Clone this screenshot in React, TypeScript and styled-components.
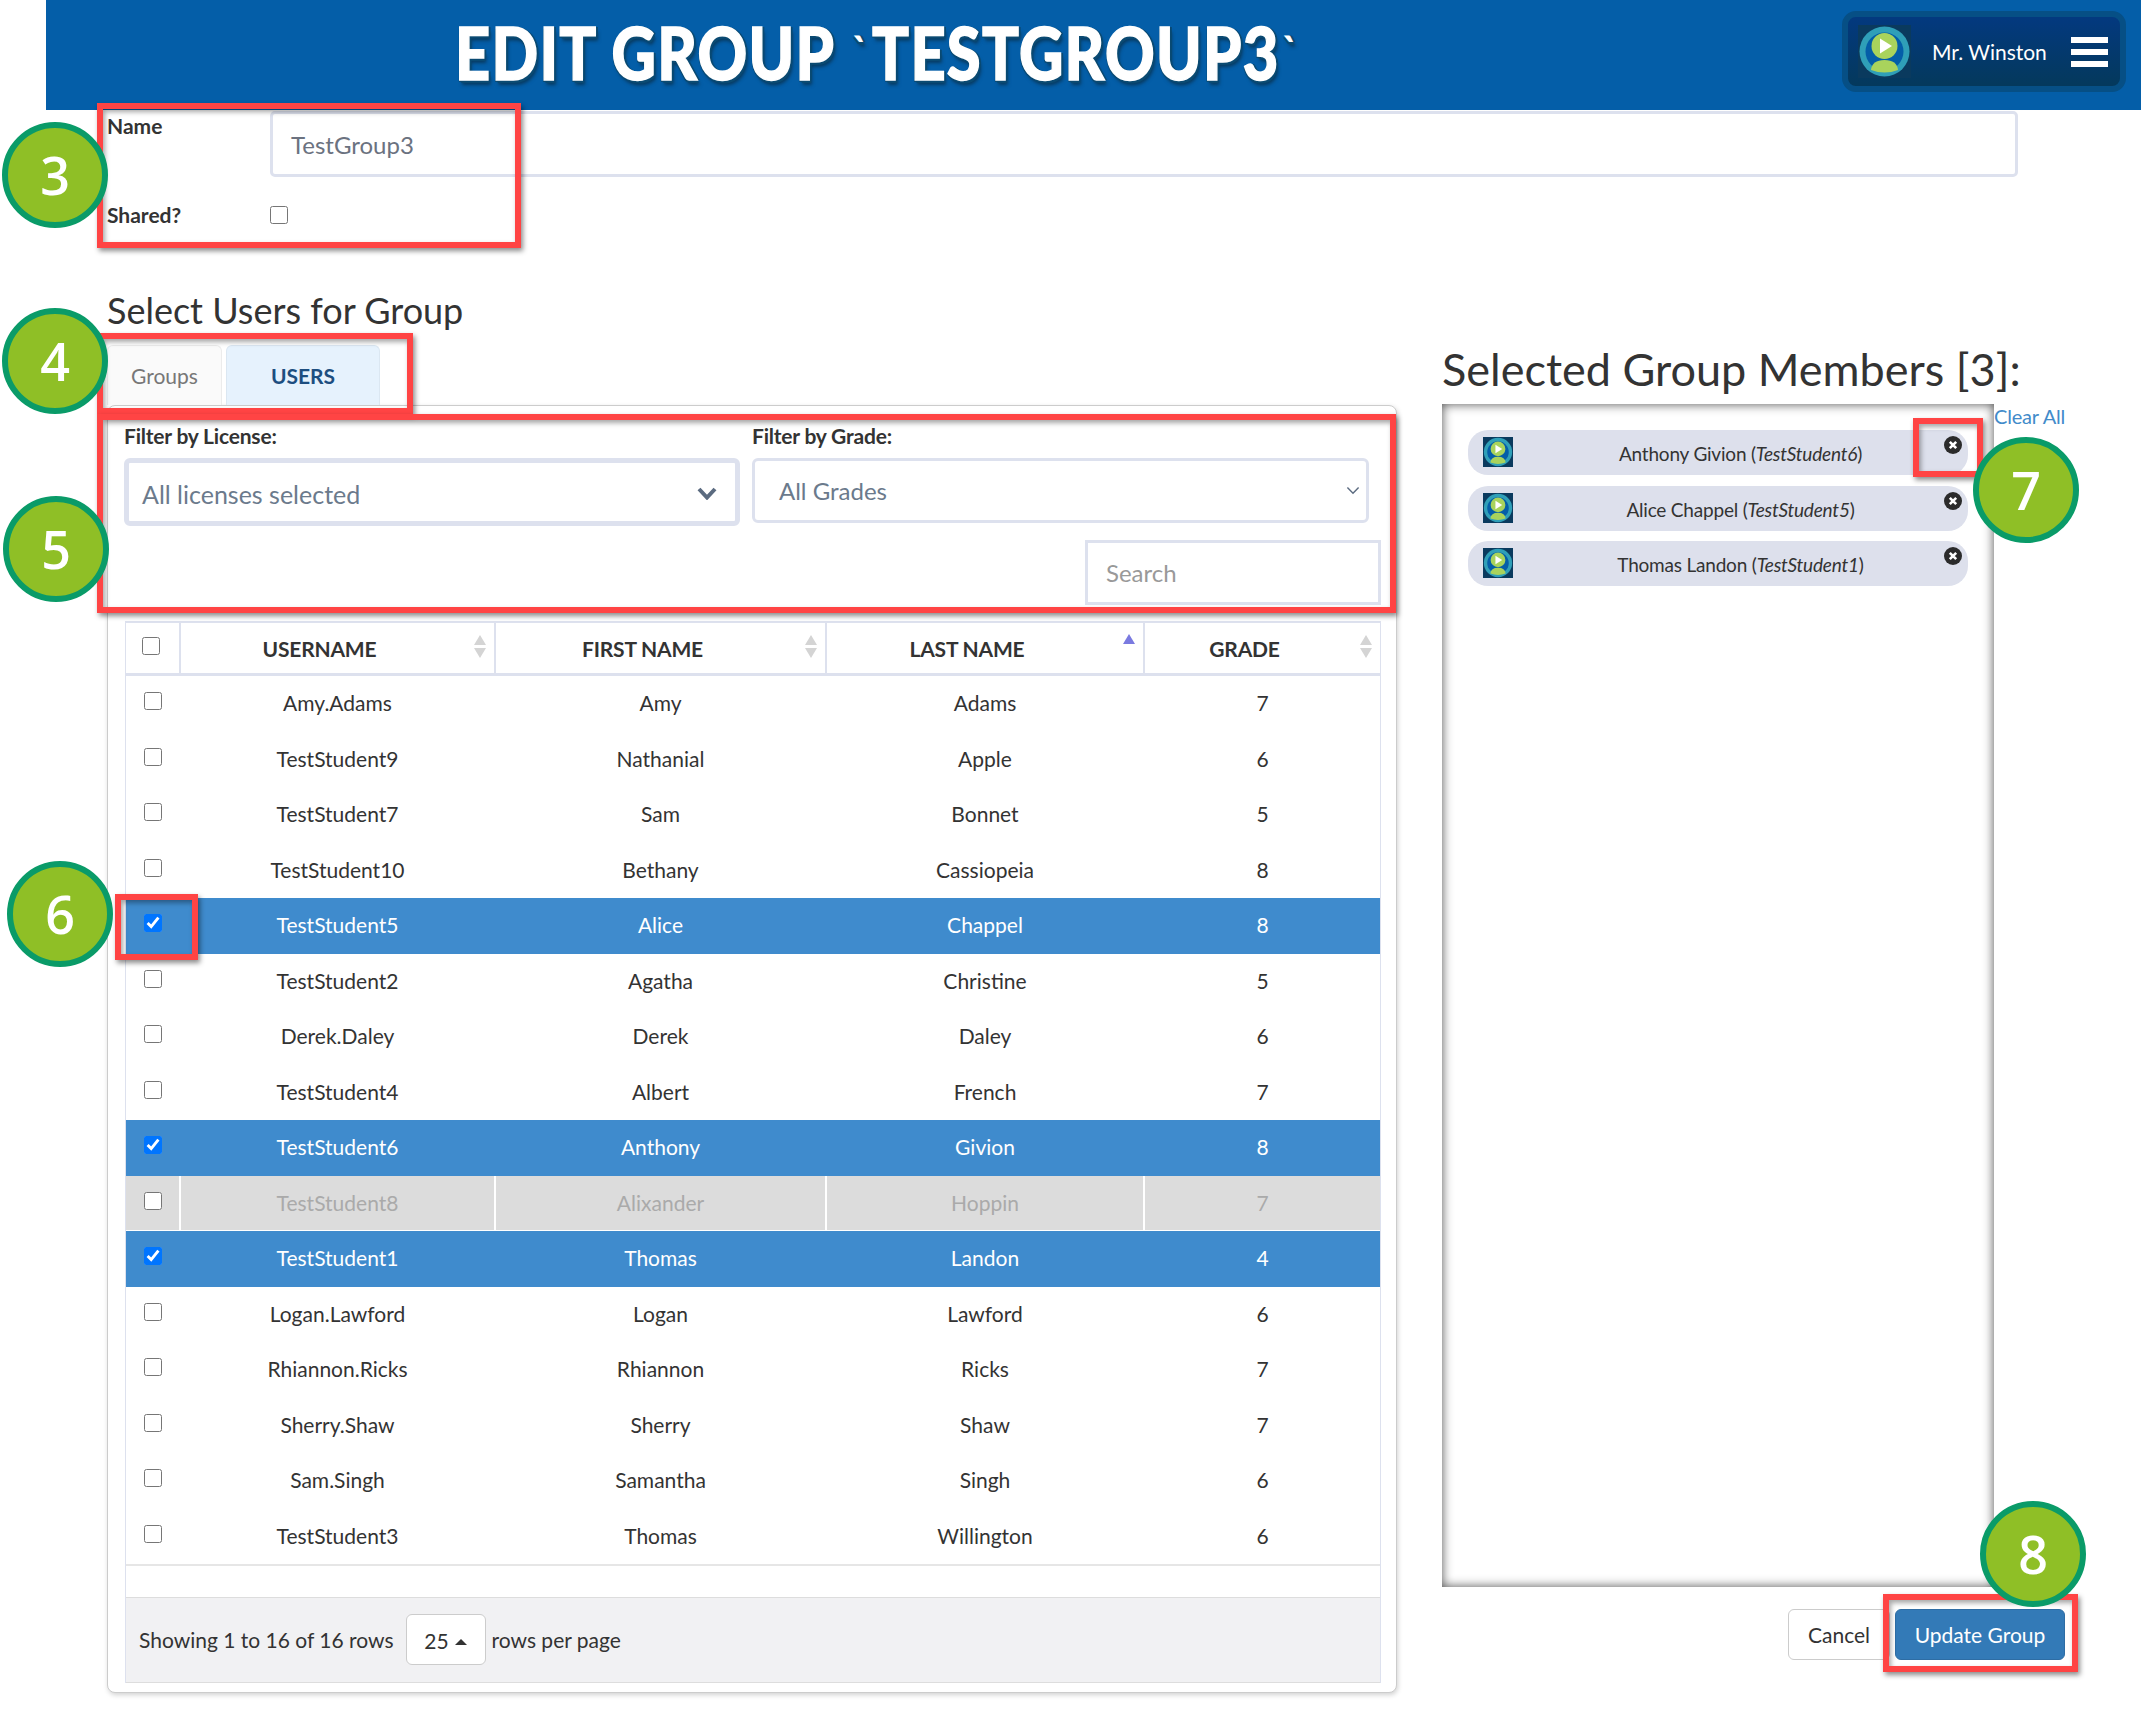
import React from "react";
import styled, { createGlobalStyle } from "styled-components";

const Global = createGlobalStyle`
  html, body { margin: 0; padding: 0; background: #fff; }
  body { font-family: Lato, "Open Sans", sans-serif; color: #333; font-size: 21px; }
  * { box-sizing: border-box; }
`;

const Page = styled.div`
  position: relative;
  width: 2141px;
  height: 1722px;
  overflow: hidden;
`;

const Header = styled.header`
  height: 110px;
  margin-left: 46px;
  background: #045ea8;
  display: flex;
  align-items: center;
  padding: 0 15px 7px 0;
`;

const Title = styled.h1`
  margin: 0 0 0 409px;
  width: 840px;
  white-space: nowrap;
  font-family: "Lato", sans-serif;
  font-weight: 900;
  font-size: 73px;
  letter-spacing: 1.5px;
  line-height: 100px;
  color: #fff;
  transform: scaleX(0.84);
  transform-origin: left center;
  -webkit-text-stroke: 1.5px #fff;
  text-shadow: 2px 3px 0 #0a4a72, -1px 2px 0 #0a4a72, 3px 0 0 #0a4a72, 3px 5px 4px #083a60;
`;

const Tick = styled.span`
  font-size: 44px;
  vertical-align: 12px;
  -webkit-text-stroke: 0;
  margin: 0 4px;
`;

const UserBox = styled.div`
  margin-left: auto;
  width: 284px;
  height: 81px;
  border: 6px solid #064f85;
  border-radius: 14px;
  background: linear-gradient(#03397f, #04395c);
  display: flex;
  align-items: center;
  padding-left: 10px;
`;

const UserName = styled.span`
  margin-left: 21px;
  color: #fff;
  font-size: 21px;
  white-space: nowrap;
`;

const Burger = styled.div`
  margin-left: 24px;
  width: 37px;
  display: grid;
  gap: 6px;
`;

const BurgerBar = styled.div`
  height: 6px;
  background: #fff;
`;

const Form = styled.section`
  padding: 1px 0 0 107px;
`;

const FormRow = styled.div<{ $mt?: number; $align?: string }>`
  display: flex;
  align-items: ${(p) => p.$align ?? "flex-start"};
  margin-top: ${(p) => p.$mt ?? 0}px;
`;

const FieldLabel = styled.label`
  width: 163px;
  font-size: 21px;
  font-weight: 700;
  line-height: 26px;
  color: #333;
`;

const NameLabel = styled(FieldLabel)`
  margin-top: 2px;
`;

const NameInput = styled.div`
  width: 1748px;
  height: 66px;
  border: 3px solid #dde1ee;
  border-radius: 5px;
  padding-left: 18px;
  display: flex;
  align-items: center;
  color: #6b7280;
  font-size: 24px;
`;

const Check = styled.input.attrs({ type: "checkbox" })`
  width: 18px;
  height: 18px;
  margin: 0;
  flex: none;
`;

const Main = styled.main`
  display: flex;
  gap: 45px;
  margin: 60px 0 0 107px;
`;

const LeftCol = styled.div`
  width: 1290px;
`;

const Heading = styled.h2`
  margin: 0;
  font-size: 36px;
  line-height: 44px;
  font-weight: 400;
  color: #333;
`;

const Tabs = styled.div`
  display: flex;
  gap: 4px;
  margin-top: 13px;
  height: 60px;
`;

const Tab = styled.div<{ $active?: boolean }>`
  width: ${(p) => (p.$active ? 154 : 115)}px;
  display: flex;
  align-items: center;
  justify-content: center;
  border: 1px solid ${(p) => (p.$active ? "#dbe7f2" : "#ececec")};
  border-bottom: none;
  border-radius: 6px 6px 0 0;
  background: ${(p) => (p.$active ? "#e6f2fd" : "#fafafa")};
  color: ${(p) => (p.$active ? "#1d4e80" : "#777")};
  font-size: 21px;
  font-weight: ${(p) => (p.$active ? 700 : 400)};
`;

const Card = styled.div`
  width: 1290px;
  height: 1288px;
  border: 1px solid #ccc;
  border-radius: 8px;
  box-shadow: 1px 2px 5px rgba(0, 0, 0, 0.18);
  padding: 17px 15px 9px 17px;
  background: #fff;
`;

const Filters = styled.div`
  display: flex;
  gap: 12px;
  margin-left: -1px;
`;

const Filter = styled.div<{ $w: number }>`
  width: ${(p) => p.$w}px;
`;

const FilterLabel = styled.div`
  font-size: 21px;
  font-weight: 700;
  line-height: 26px;
  letter-spacing: -0.2px;
  margin-bottom: 9px;
  color: #333;
`;

const SelectBox = styled.div<{ $h: number; $bw: number; $pl: number; $pr: number; $pt: number; $size: number }>`
  height: ${(p) => p.$h}px;
  border: ${(p) => p.$bw}px solid #dde1ee;
  border-radius: 6px;
  padding: ${(p) => p.$pt}px ${(p) => p.$pr}px 0 ${(p) => p.$pl}px;
  display: flex;
  align-items: center;
  justify-content: space-between;
  color: #6b7a8c;
  font-size: ${(p) => p.$size}px;
`;

const SearchRow = styled.div`
  display: flex;
  justify-content: flex-end;
  margin-top: 14px;
`;

const SearchBox = styled.div`
  width: 296px;
  height: 65px;
  border: 3px solid #dde1ee;
  padding-left: 18px;
  display: flex;
  align-items: center;
  color: #999;
  font-size: 24px;
`;

const Table = styled.div`
  margin-top: 16px;
  border: 1px solid #dde1ee;
  border-bottom: none;
  border-top-width: 2px;
`;

const columns = "53px 315px 331px 318px 1fr";

const HeadRow = styled.div`
  display: grid;
  grid-template-columns: ${columns};
  height: 53px;
  border-bottom: 3px solid #dde1ee;
`;

const HeadCell = styled.div`
  position: relative;
  display: flex;
  align-items: center;
  justify-content: center;
  padding-right: 36px;
  font-size: 21px;
  font-weight: 700;
  letter-spacing: -0.2px;
  color: #333;
  border-left: 2px solid #dde1ee;
`;

const HeadCheckCell = styled.div`
  padding: 11px 0 0 16px;
`;

const SortIcon = styled.svg`
  position: absolute;
  right: 7px;
  top: 11px;
`;

const Row = styled.div<{ $state?: string }>`
  display: grid;
  grid-template-columns: ${columns};
  height: 55.5px;
  align-items: stretch;
  background: ${(p) =>
    p.$state === "sel" ? "#3f8bcd" : p.$state === "off" ? "#dcdcdc" : "#fff"};
  color: ${(p) =>
    p.$state === "sel" ? "#fff" : p.$state === "off" ? "#aaa" : "#333"};
  border-bottom: 1px solid ${(p) => (p.$state === "off" ? "#fff" : "transparent")};
`;

const Cell = styled.div<{ $sep?: boolean }>`
  display: flex;
  align-items: center;
  justify-content: center;
  font-size: 21px;
  padding-bottom: 1px;
  border-left: 2px solid ${(p) => (p.$sep ? "#fff" : "transparent")};
`;

const CheckCell = styled.div`
  padding: 13px 0 0 18px;
`;

const TableEnd = styled.div`
  height: 33px;
  border-top: 2px solid #e6e6e6;
`;

const Footer = styled.div`
  height: 86px;
  background: #f1f1f3;
  border-top: 1px solid #ddd;
  border-bottom: 1px solid #ddd;
  display: flex;
  align-items: center;
  padding: 0 0 2px 13px;
  font-size: 21px;
`;

const PageSize = styled.div`
  width: 80px;
  height: 51px;
  margin: 0 6px 0 12px;
  border: 1px solid #ccc;
  border-radius: 6px;
  background: #fff;
  display: flex;
  align-items: center;
  justify-content: center;
  gap: 6px;
  padding-top: 3px;
`;

const Caret = styled.span`
  width: 0;
  height: 0;
  margin-top: 3px;
  border-left: 6px solid transparent;
  border-right: 6px solid transparent;
  border-bottom: 6px solid #333;
`;

const RightCol = styled.div`
  width: 623px;
`;

const BigHeading = styled.h2`
  margin: 55px 0 9px;
  font-size: 45px;
  line-height: 52px;
  font-weight: 400;
  color: #333;
  white-space: nowrap;
`;

const PanelRow = styled.div`
  display: flex;
`;

const Panel = styled.div`
  width: 552px;
  height: 1183px;
  background: #fff;
  box-shadow: inset 0 0 11px rgba(0, 0, 0, 0.7);
  padding: 26px 26px 0 26px;
  display: grid;
  align-content: start;
  gap: 10.5px;
`;

const ClearAll = styled.a`
  color: #428bca;
  font-size: 20px;
  line-height: 24px;
  letter-spacing: -0.2px;
`;

const Chip = styled.div`
  position: relative;
  height: 45px;
  border-radius: 20px;
  background: #dde0ec;
  display: flex;
  padding-left: 15px;
`;

const ChipAvatar = styled.div`
  margin-top: 7px;
  height: 30px;
`;

const ChipName = styled.div`
  flex: 1;
  text-align: center;
  font-size: 19px;
  line-height: 47px;
  letter-spacing: -0.2px;
  color: #333;
`;

const ChipClose = styled.svg`
  position: absolute;
  right: 6px;
  top: 6px;
`;

const Actions = styled.div`
  display: flex;
  justify-content: flex-end;
  gap: 5px;
  margin-top: 22px;
`;

const Button = styled.button<{ $primary?: boolean }>`
  height: 51px;
  width: ${(p) => (p.$primary ? 170 : 102)}px;
  border: 1px solid ${(p) => (p.$primary ? "#2e6da4" : "#ccc")};
  border-radius: 6px;
  background: ${(p) => (p.$primary ? "#337ab7" : "#fff")};
  color: ${(p) => (p.$primary ? "#fff" : "#333")};
  font-family: Lato, sans-serif;
  font-size: 21px;
  padding: 0;
`;

const Frame = styled.div<{ $x: number; $y: number; $w: number; $h: number }>`
  position: absolute;
  left: ${(p) => p.$x}px;
  top: ${(p) => p.$y}px;
  width: ${(p) => p.$w}px;
  height: ${(p) => p.$h}px;
  border: 6px solid #ff4444;
  box-shadow: 2px 3px 5px rgba(0, 0, 0, 0.45), inset 2px 3px 5px rgba(0, 0, 0, 0.35);
  pointer-events: none;
`;

const Badge = styled.div<{ $x: number; $y: number }>`
  position: absolute;
  left: ${(p) => p.$x}px;
  top: ${(p) => p.$y}px;
  width: 106px;
  height: 106px;
  padding-bottom: 2px;
  border: 6px solid #0a9b68;
  border-radius: 50%;
  background: #8fbf26;
  color: #fff;
  font-family: "Open Sans", sans-serif;
  font-size: 52px;
  font-weight: 600;
  display: flex;
  align-items: center;
  justify-content: center;
`;

const Avatar = ({ size }: { size: number }) => (
  <svg width={size} height={size} viewBox="0 0 53 53">
    <rect width="53" height="53" fill="#0a3a5e" />
    <circle cx="26.5" cy="26.5" r="25" fill="#2f9fb8" />
    <circle cx="26.5" cy="26.5" r="19" fill="#045ea8" />
    <circle cx="26.5" cy="21" r="13" fill="#a9d35c" />
    <path d="M22 13.5 L34 21 L22 28.5 Z" fill="#fff" />
    <path d="M13 45 Q14 35 26.5 35 Q39 35 40 45 Q26.5 50 13 45 Z" fill="#a9d35c" />
  </svg>
);

const Sort = ({ active }: { active?: boolean }) => (
  <SortIcon width="14" height="26" viewBox="0 0 14 26">
    {active ? (
      <path d="M7 0 L13 10 L1 10 Z" fill="#7a7ae0" />
    ) : (
      <>
        <path d="M7 1 L13 11 L1 11 Z" fill="#d4d4d4" />
        <path d="M1 14 L13 14 L7 24 Z" fill="#d4d4d4" />
      </>
    )}
  </SortIcon>
);

const ChevronDown = ({ w, stroke }: { w: number; stroke: number }) => (
  <svg width={w} height={w * 0.65} viewBox="0 0 20 13" fill="none">
    <path d="M2 2 L10 10.5 L18 2" stroke="#5b6b80" strokeWidth={stroke} />
  </svg>
);

const rows: [string, string, string, string, string?][] = [
  ["Amy.Adams", "Amy", "Adams", "7"],
  ["TestStudent9", "Nathanial", "Apple", "6"],
  ["TestStudent7", "Sam", "Bonnet", "5"],
  ["TestStudent10", "Bethany", "Cassiopeia", "8"],
  ["TestStudent5", "Alice", "Chappel", "8", "sel"],
  ["TestStudent2", "Agatha", "Christine", "5"],
  ["Derek.Daley", "Derek", "Daley", "6"],
  ["TestStudent4", "Albert", "French", "7"],
  ["TestStudent6", "Anthony", "Givion", "8", "sel"],
  ["TestStudent8", "Alixander", "Hoppin", "7", "off"],
  ["TestStudent1", "Thomas", "Landon", "4", "sel"],
  ["Logan.Lawford", "Logan", "Lawford", "6"],
  ["Rhiannon.Ricks", "Rhiannon", "Ricks", "7"],
  ["Sherry.Shaw", "Sherry", "Shaw", "7"],
  ["Sam.Singh", "Samantha", "Singh", "6"],
  ["TestStudent3", "Thomas", "Willington", "6"],
];

const members = [
  ["Anthony Givion", "TestStudent6"],
  ["Alice Chappel", "TestStudent5"],
  ["Thomas Landon", "TestStudent1"],
];

const frames = [
  { x: 97, y: 103, w: 424, h: 145 },
  { x: 97, y: 333, w: 316, h: 81 },
  { x: 97, y: 414, w: 1299, h: 199 },
  { x: 115, y: 894, w: 83, h: 66 },
  { x: 1913, y: 418, w: 70, h: 59 },
  { x: 1883, y: 1594, w: 195, h: 78 },
];

const badges = [
  { n: "3", x: 2, y: 122 },
  { n: "4", x: 2, y: 308 },
  { n: "5", x: 3, y: 496 },
  { n: "6", x: 7, y: 861 },
  { n: "7", x: 1973, y: 437 },
  { n: "8", x: 1980, y: 1501 },
];

export default function App() {
  return (
    <Page>
      <Global />
      <Header>
        <Title>
          EDIT GROUP <Tick>`</Tick>TESTGROUP3<Tick>`</Tick>
        </Title>
        <UserBox>
          <Avatar size={53} />
          <UserName>Mr. Winston</UserName>
          <Burger>
            <BurgerBar />
            <BurgerBar />
            <BurgerBar />
          </Burger>
        </UserBox>
      </Header>

      <Form>
        <FormRow>
          <NameLabel>Name</NameLabel>
          <NameInput>TestGroup3</NameInput>
        </FormRow>
        <FormRow $mt={25} $align="center">
          <FieldLabel>Shared?</FieldLabel>
          <Check />
        </FormRow>
      </Form>

      <Main>
        <LeftCol>
          <Heading>Select Users for Group</Heading>
          <Tabs>
            <Tab>Groups</Tab>
            <Tab $active>USERS</Tab>
          </Tabs>
          <Card>
            <Filters>
              <Filter $w={616}>
                <FilterLabel>Filter by License:</FilterLabel>
                <SelectBox $h={68} $bw={5} $pl={13} $pr={18} $pt={3} $size={25}>
                  All licenses selected
                  <ChevronDown w={20} stroke={4} />
                </SelectBox>
              </Filter>
              <Filter $w={617}>
                <FilterLabel>Filter by Grade:</FilterLabel>
                <SelectBox $h={65} $bw={3} $pl={24} $pr={6} $pt={0} $size={24}>
                  All Grades
                  <ChevronDown w={14} stroke={2} />
                </SelectBox>
              </Filter>
            </Filters>
            <SearchRow>
              <SearchBox>Search</SearchBox>
            </SearchRow>
            <Table>
              <HeadRow>
                <HeadCheckCell>
                  <Check />
                </HeadCheckCell>
                <HeadCell>
                  USERNAME
                  <Sort />
                </HeadCell>
                <HeadCell>
                  FIRST NAME
                  <Sort />
                </HeadCell>
                <HeadCell>
                  LAST NAME
                  <Sort active />
                </HeadCell>
                <HeadCell>
                  GRADE
                  <Sort />
                </HeadCell>
              </HeadRow>
              {rows.map(([u, f, l, g, state]) => (
                <Row key={u} $state={state}>
                  <CheckCell>
                    <Check defaultChecked={state === "sel"} />
                  </CheckCell>
                  <Cell $sep={state === "off"}>{u}</Cell>
                  <Cell $sep={state === "off"}>{f}</Cell>
                  <Cell $sep={state === "off"}>{l}</Cell>
                  <Cell $sep={state === "off"}>{g}</Cell>
                </Row>
              ))}
              <TableEnd />
              <Footer>
                Showing 1 to 16 of 16 rows
                <PageSize>
                  25
                  <Caret />
                </PageSize>
                rows per page
              </Footer>
            </Table>
          </Card>
        </LeftCol>

        <RightCol>
          <BigHeading>Selected Group Members [3]:</BigHeading>
          <PanelRow>
            <Panel>
              {members.map(([name, user]) => (
                <Chip key={user}>
                  <ChipAvatar>
                    <Avatar size={30} />
                  </ChipAvatar>
                  <ChipName>
                    {name} (<em>{user}</em>)
                  </ChipName>
                  <ChipClose width="18" height="18" viewBox="0 0 18 18">
                    <circle cx="9" cy="9" r="9" fill="#2b2b2b" />
                    <path d="M5.8 5.8 L12.2 12.2 M12.2 5.8 L5.8 12.2" stroke="#fff" strokeWidth="2.6" />
                  </ChipClose>
                </Chip>
              ))}
            </Panel>
            <ClearAll>Clear All</ClearAll>
          </PanelRow>
          <Actions>
            <Button>Cancel</Button>
            <Button $primary>Update Group</Button>
          </Actions>
        </RightCol>
      </Main>

      {frames.map((f) => (
        <Frame key={`${f.x}-${f.y}`} $x={f.x} $y={f.y} $w={f.w} $h={f.h} />
      ))}
      {badges.map((b) => (
        <Badge key={b.n} $x={b.x} $y={b.y}>
          {b.n}
        </Badge>
      ))}
    </Page>
  );
}
